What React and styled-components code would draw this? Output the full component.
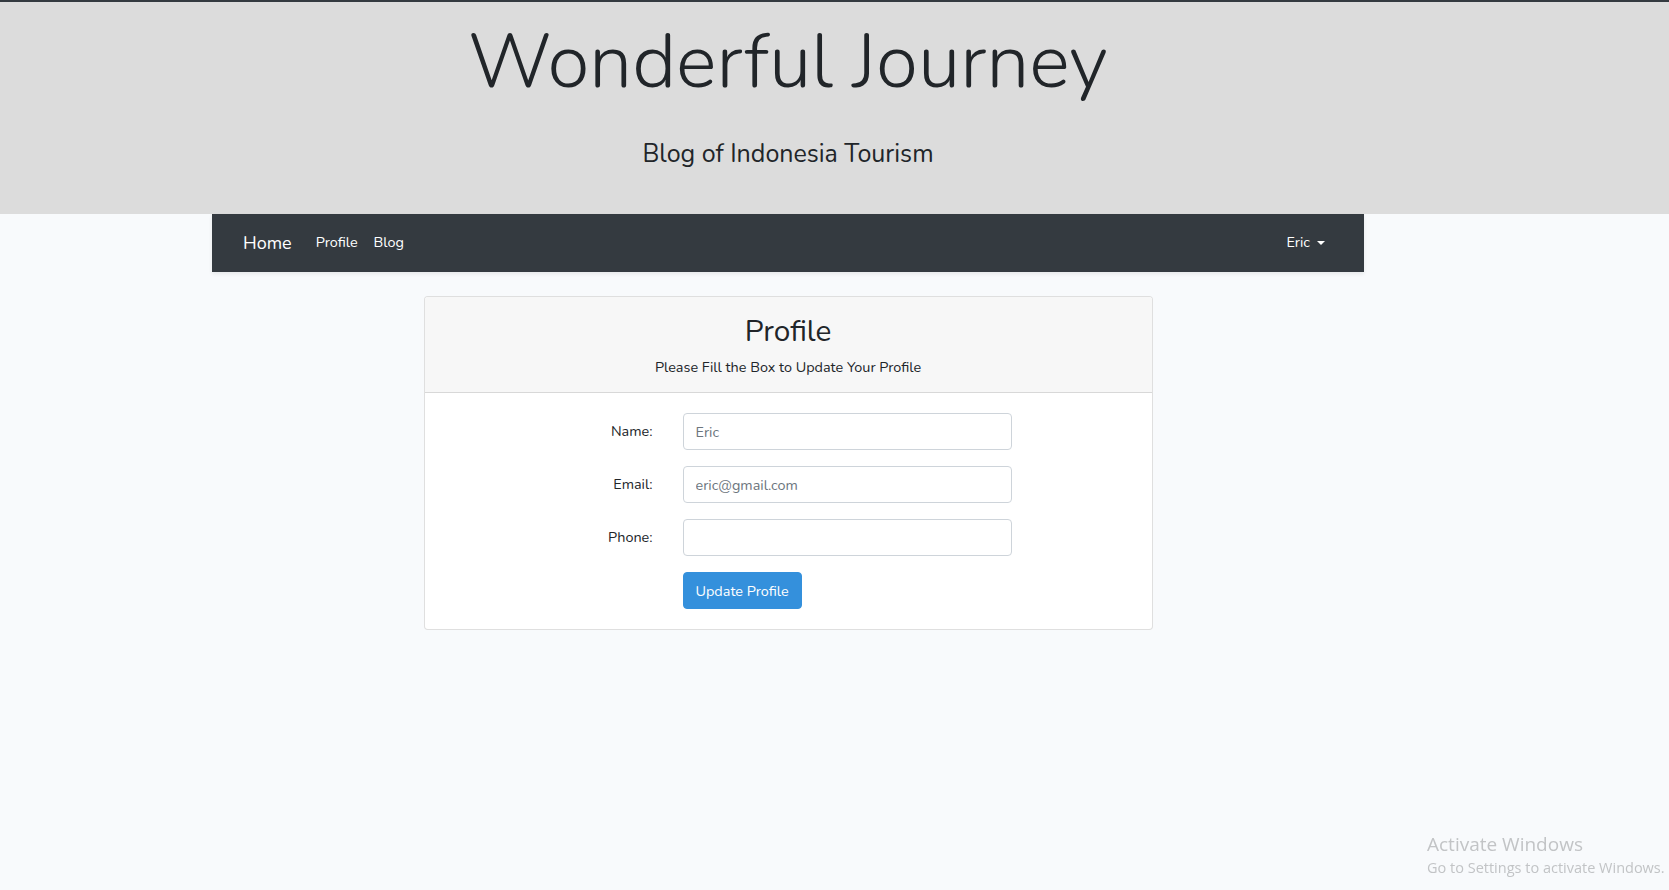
import React from "react";
import styled, { createGlobalStyle } from "styled-components";

const GlobalStyle = createGlobalStyle`
  body {
    margin: 0;
    background-color: #f8fafc;
    font-family: "Nunito", "Open Sans", "Noto Sans", sans-serif;
    font-size: 14.4px;
    line-height: 1.6;
    color: #212529;
  }
  * {
    box-sizing: border-box;
  }
`;

const Page = styled.div`
  min-height: 890px;
  border-top: 2px solid #343a40;
`;

const Hero = styled.header`
  background-color: #dcdcdc;
  height: 212px;
`;

const HeroInner = styled.div`
  width: 1576px;
  padding-top: 15px;
  text-align: center;
`;

const Title = styled.h1`
  margin: 0;
  font-size: 76.5px;
  font-weight: 300;
  line-height: 90px;
`;

const Subtitle = styled.p`
  margin: 31px 0 0;
  font-size: 25px;
  font-weight: 400;
  line-height: 32px;
`;

const Main = styled.main`
  width: 1576px;
`;

const Navbar = styled.nav`
  width: 1152px;
  height: 58px;
  margin: 0 auto;
  padding: 0 31px;
  display: flex;
  align-items: center;
  background-color: #343a40;
  box-shadow: 0 2px 4px rgba(0, 0, 0, 0.075);
`;

const Brand = styled.a`
  color: #fff;
  font-size: 18px;
  margin-right: 16px;
  margin-top: 1px;
  text-decoration: none;
`;

const NavLink = styled.a`
  color: #fff;
  font-size: 14.4px;
  padding: 0 8px;
  text-decoration: none;
  display: flex;
  align-items: center;
  gap: 7px;
  margin-left: ${(p) => (p.$push ? "auto" : "0")};
`;

const Caret = styled.span`
  width: 0;
  height: 0;
  border-top: 4.5px solid #fff;
  border-left: 4.5px solid transparent;
  border-right: 4.5px solid transparent;
`;

const Card = styled.section`
  width: 729px;
  margin: 24px auto 0;
  background: #fff;
  border: 1px solid rgba(0, 0, 0, 0.125);
  border-radius: 4px;
  overflow: hidden;
`;

const CardHeader = styled.div`
  height: 96px;
  padding-top: 16px;
  background-color: #f7f7f7;
  border-bottom: 1px solid rgba(0, 0, 0, 0.125);
  text-align: center;
`;

const CardTitle = styled.h2`
  margin: 0;
  font-size: 29.8px;
  font-weight: 400;
  line-height: 37px;
`;

const CardSub = styled.div`
  margin-top: 6px;
  font-size: 14.4px;
`;

const CardBody = styled.form`
  padding: 20px;
  display: flex;
  flex-direction: column;
  gap: 16px;
`;

const FormRow = styled.div`
  display: grid;
  grid-template-columns: 208px 329px;
  column-gap: 30px;
  align-items: center;
`;

const Label = styled.label`
  text-align: right;
  font-size: 14.4px;
`;

const Input = styled.input`
  height: 37px;
  width: 329px;
  padding: 6px 12px;
  font-family: inherit;
  font-size: 14.4px;
  color: #495057;
  background: #fff;
  border: 1px solid #ced4da;
  border-radius: 4px;
  outline: none;
  &::placeholder {
    color: #6c757d;
  }
`;

const Button = styled.button`
  grid-column: 2;
  justify-self: start;
  height: 37px;
  padding: 0 12px;
  font-family: inherit;
  font-size: 14.4px;
  color: #fff;
  background-color: #3490dc;
  border: 1px solid #3490dc;
  border-radius: 4px;
`;

const Watermark = styled.div`
  position: fixed;
  left: 1427px;
  top: 833px;
  font-family: "Open Sans", "Noto Sans", sans-serif;
  color: #c2c4c6;
  line-height: 1.2;
`;

const WatermarkTitle = styled.div`
  font-size: 19px;
`;

const WatermarkSub = styled.div`
  font-size: 14.5px;
  margin-top: 3px;
`;

const fields = [
  { label: "Name:", placeholder: "Eric" },
  { label: "Email:", placeholder: "eric@gmail.com" },
  { label: "Phone:", placeholder: "" },
];

export default function App() {
  return (
    <>
      <GlobalStyle />
      <Page>
        <Hero>
          <HeroInner>
            <Title>Wonderful Journey</Title>
            <Subtitle>Blog of Indonesia Tourism</Subtitle>
          </HeroInner>
        </Hero>
        <Main>
          <Navbar>
            <Brand href="#">Home</Brand>
            <NavLink href="#">Profile</NavLink>
            <NavLink href="#">Blog</NavLink>
            <NavLink href="#" $push>
              Eric <Caret />
            </NavLink>
          </Navbar>
          <Card>
            <CardHeader>
              <CardTitle>Profile</CardTitle>
              <CardSub>Please Fill the Box to Update Your Profile</CardSub>
            </CardHeader>
            <CardBody onSubmit={(e) => e.preventDefault()}>
              {fields.map((f) => (
                <FormRow key={f.label}>
                  <Label>{f.label}</Label>
                  <Input type="text" placeholder={f.placeholder} />
                </FormRow>
              ))}
              <FormRow>
                <Button type="submit">Update Profile</Button>
              </FormRow>
            </CardBody>
          </Card>
        </Main>
      </Page>
      <Watermark>
        <WatermarkTitle>Activate Windows</WatermarkTitle>
        <WatermarkSub>Go to Settings to activate Windows.</WatermarkSub>
      </Watermark>
    </>
  );
}
